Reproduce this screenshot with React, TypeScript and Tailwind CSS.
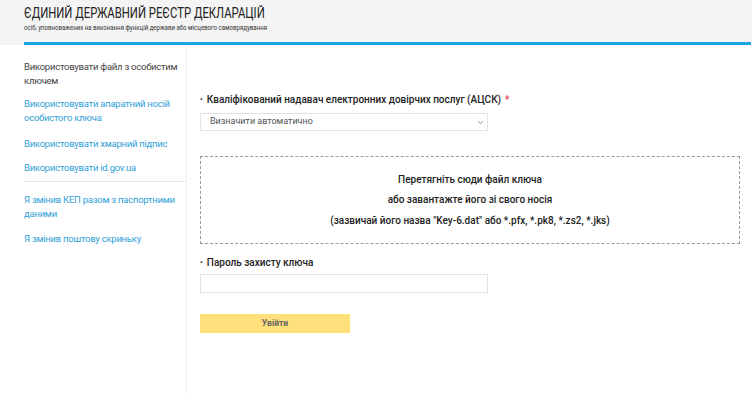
import { ChevronDown } from 'lucide-react';

function App() {
  return (
    <div className="h-[395px] w-[752px] overflow-hidden bg-white font-['Roboto',sans-serif] text-[#333]">
      <header className="h-[45px] bg-[#f4f4f4]">
        <div className="pl-6 pt-[5px]">
          <h1 className="origin-left scale-x-[0.78] whitespace-nowrap text-[14.5px] leading-[18px] text-[#222]">
            ЄДИНИЙ ДЕРЖАВНИЙ РЕЄСТР ДЕКЛАРАЦІЙ
          </h1>
          <p className="mt-px origin-left scale-x-[0.87] whitespace-nowrap text-[7px] leading-[9px] text-[#333]">
            осіб, уповноважених на виконання функцій держави або місцевого самоврядування
          </p>
        </div>
      </header>
      <div className="-mt-[3px] ml-6 mr-px h-[3px] bg-[#20a4e0]" />

      <div className="ml-6 flex h-[350px]">
        <aside className="w-[163px] border-r border-[#f0f0f0] pt-[15px] pr-2 text-[9.5px] leading-[14px] tracking-[-0.25px]">
          <p className="text-[#444]">Використовувати файл з особистим ключем</p>
          <a className="mt-[9px] block text-[#2fa0d8]">Використовувати апаратний носій особистого ключа</a>
          <a className="mt-[12px] block text-[#2fa0d8]">Використовувати хмарний підпис</a>
          <a className="mt-[10px] block text-[#2fa0d8]">Використовувати id.gov.ua</a>
          <div className="mr-[-8px] mt-[6px] border-t border-[#e8e8e8]" />
          <a className="mt-[11px] block text-[#2fa0d8]">Я змінив КЕП разом з паспортними даними</a>
          <a className="mt-[11px] block text-[#2fa0d8]">Я змінив поштову скриньку</a>
        </aside>

        <main className="flex-1 pl-[13px] pr-3 pt-[48px]">
          <label className="block text-[10px] font-medium leading-[14px] text-[#222]">
            <span className="mr-1 align-top text-[8px]">•</span>Кваліфікований надавач електронних довірчих послуг (АЦСК)
            <span className="ml-1 text-[#e0433f]">*</span>
          </label>
          <div className="mt-[6px] flex h-[18px] w-[288px] items-center justify-between border border-[#e2e2e2] pl-[9px] pr-[2px] text-[9px] text-[#555]">
            <span>Визначити автоматично</span>
            <ChevronDown className="h-[9px] w-[9px] text-[#777]" strokeWidth={2.2} />
          </div>

          <div className="mt-[25px] flex h-[88px] w-[540px] flex-col items-center justify-center gap-[6.5px] border border-dashed border-[#9a9a9a] text-[10px] font-medium leading-[14px] text-[#222]">
            <p>Перетягніть сюди файл ключа</p>
            <p>або завантажте його зі свого носія</p>
            <p>(зазвичай його назва "Key-6.dat" або *.pfx, *.pk8, *.zs2, *.jks)</p>
          </div>

          <label className="mt-[12px] block text-[10px] font-medium leading-[14px] text-[#222]">
            <span className="mr-1 align-top text-[8px]">•</span>Пароль захисту ключа
          </label>
          <input
            type="password"
            className="mt-[4px] block h-[19px] w-[288px] border border-[#e2e2e2] outline-none"
          />

          <button
            type="button"
            className="mt-[21px] block h-[19px] w-[150px] bg-[#ffe07a] text-[8.5px] font-bold text-[#666]"
          >
            Увійти
          </button>
        </main>
      </div>
    </div>
  );
}

export default App;
